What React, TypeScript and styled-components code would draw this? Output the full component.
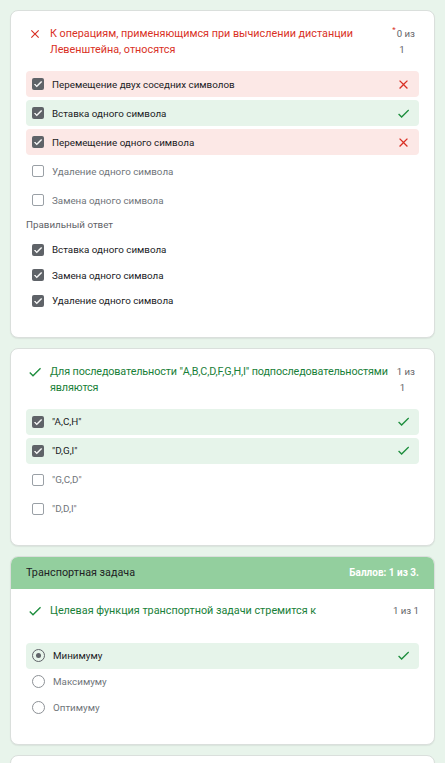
import React from "react";
import styled, { createGlobalStyle, css } from "styled-components";

const GlobalStyle = createGlobalStyle`
  html, body { margin: 0; padding: 0; }
  body {
    background: #e8f4eb;
    font-family: Roboto, "Noto Sans", Arial, sans-serif;
    color: #202124;
  }
`;

const RED = "#d93025";
const GREEN = "#1e8e3e";

const Page = styled.div`
  display: flex;
  flex-direction: column;
  gap: 10px;
  padding: 0 10px 20px;
`;

const CardTail = styled.div`
  height: 0;
  border-radius: 0 0 8px 8px;
  box-shadow: 0 1px 0 #d6dbd8;
`;

const Card = styled.div<{ $flush?: boolean }>`
  background: #fff;
  border: 1px solid #dadfdc;
  border-radius: 8px;
  overflow: hidden;
  box-shadow: 0 1px 1px rgba(60, 64, 67, 0.08);
  ${(p) =>
    !p.$flush &&
    css`
      padding: 15px 15px 23px;
    `}
`;

const CardBody = styled.div`
  padding: 14px 15px 23px;
`;

const SectionHeader = styled.div`
  height: 32px;
  background: #93cf9e;
  display: flex;
  align-items: center;
  justify-content: space-between;
  padding: 0 15px;
`;

const SectionTitle = styled.span`
  font-size: 10.8px;
  color: #202124;
`;

const SectionScore = styled.span`
  font-size: 10px;
  font-weight: 700;
  color: #fff;
`;

const TitleRow = styled.div`
  display: flex;
  align-items: flex-start;
`;

const TitleIcon = styled.span`
  flex: 0 0 18px;
  height: 16px;
  margin-right: 6px;
  display: flex;
  align-items: center;
  justify-content: center;
`;

const TitleText = styled.div<{ $ok: boolean; $tight?: boolean }>`
  flex: 1;
  min-width: 0;
  font-size: 10.8px;
  line-height: 16px;
  letter-spacing: ${(p) => (p.$tight ? "-0.13px" : "normal")};
  color: ${(p) => (p.$ok ? "#188038" : RED)};
`;

const Score = styled.div<{ $pad?: boolean }>`
  flex: 0 0 auto;
  margin-left: 3px;
  padding-right: ${(p) => (p.$pad ? 4 : 0)}px;
  font-size: 9.6px;
  line-height: 16px;
  color: #5f6368;
  white-space: nowrap;
`;

const ScoreLine = styled.div<{ $indent?: number }>`
  padding-left: ${(p) => p.$indent ?? 0}px;
`;

const Star = styled.span`
  color: ${RED};
  font-size: 8px;
  line-height: 8px;
  vertical-align: top;
  margin-right: 1px;
`;

const Options = styled.div<{ $top?: number; $gap?: number }>`
  display: flex;
  flex-direction: column;
  gap: ${(p) => p.$gap ?? 3}px;
  margin-top: ${(p) => p.$top ?? 13}px;
`;

type Status = "wrong" | "right" | "none";

const OptionRow = styled.div<{ $status: Status; $h?: number }>`
  height: ${(p) => p.$h ?? 26}px;
  display: flex;
  align-items: center;
  padding: 0 8px 0 6px;
  border-radius: 4px;
  background: ${(p) =>
    p.$status === "wrong" ? "#fce8e6" : p.$status === "right" ? "#e6f4ea" : "transparent"};
`;

const OptionLabel = styled.span<{ $active: boolean }>`
  margin-left: 8px;
  font-size: 9.8px;
  color: ${(p) => (p.$active ? "#202124" : "#70757a")};
`;

const RowMark = styled.span`
  margin-left: auto;
  display: flex;
  align-items: center;
`;

const Box = styled.span<{ $checked: boolean }>`
  flex: 0 0 12px;
  width: 12px;
  height: 12px;
  box-sizing: border-box;
  border-radius: 2px;
  display: flex;
  align-items: center;
  justify-content: center;
  ${(p) =>
    p.$checked
      ? css`
          background: #5f6368;
        `
      : css`
          border: 1px solid #9aa0a6;
        `}
`;

const Radio = styled.span<{ $checked: boolean }>`
  flex: 0 0 13px;
  width: 13px;
  height: 13px;
  box-sizing: border-box;
  border-radius: 50%;
  border: 1px solid ${(p) => (p.$checked ? "#5f6368" : "#8d9196")};
  display: flex;
  align-items: center;
  justify-content: center;
  &::after {
    content: "";
    width: 5px;
    height: 5px;
    border-radius: 50%;
    background: ${(p) => (p.$checked ? "#5f6368" : "transparent")};
  }
`;

const CorrectLabel = styled.div`
  margin-top: 4px;
  font-size: 9.8px;
  line-height: 16px;
  color: #5f6368;
`;

const CloseIcon = ({ size, color }: { size: number; color: string }) => (
  <svg width={size} height={size} viewBox="0 0 24 24" fill={color}>
    <path d="M19 6.41L17.59 5 12 10.59 6.41 5 5 6.41 10.59 12 5 17.59 6.41 19 12 13.41 17.59 19 19 17.59 13.41 12z" />
  </svg>
);

const CheckIcon = ({ size, color }: { size: number; color: string }) => (
  <svg width={size} height={size} viewBox="0 0 24 24" fill={color}>
    <path d="M9 16.17L4.83 12l-1.42 1.41L9 19 21 7l-1.41-1.41z" />
  </svg>
);

const BoxCheck = () => (
  <svg width="10" height="10" viewBox="0 0 24 24" fill="#fff">
    <path d="M9 16.17L4.83 12l-1.42 1.41L9 19 21 7l-1.41-1.41z" stroke="#fff" strokeWidth="1.5" />
  </svg>
);

type Opt = { text: string; checked: boolean; status: Status; mark?: "x" | "ok" };

const CheckOption = ({ o, h }: { o: Opt; h?: number }) => (
  <OptionRow $status={o.status} $h={h}>
    <Box $checked={o.checked}>{o.checked && <BoxCheck />}</Box>
    <OptionLabel $active={o.checked}>{o.text}</OptionLabel>
    {o.mark && (
      <RowMark>
        {o.mark === "x" ? <CloseIcon size={15} color={RED} /> : <CheckIcon size={15} color={GREEN} />}
      </RowMark>
    )}
  </OptionRow>
);

const RadioOption = ({ o }: { o: Opt }) => (
  <OptionRow $status={o.status}>
    <Radio $checked={o.checked} />
    <OptionLabel $active={o.checked}>{o.text}</OptionLabel>
    {o.mark && (
      <RowMark>
        <CheckIcon size={15} color={GREEN} />
      </RowMark>
    )}
  </OptionRow>
);

const q1: Opt[] = [
  { text: "Перемещение двух соседних символов", checked: true, status: "wrong", mark: "x" },
  { text: "Вставка одного символа", checked: true, status: "right", mark: "ok" },
  { text: "Перемещение одного символа", checked: true, status: "wrong", mark: "x" },
  { text: "Удаление одного символа", checked: false, status: "none" },
  { text: "Замена одного символа", checked: false, status: "none" },
];

const q1correct: Opt[] = [
  { text: "Вставка одного символа", checked: true, status: "none" },
  { text: "Замена одного символа", checked: true, status: "none" },
  { text: "Удаление одного символа", checked: true, status: "none" },
];

const q2: Opt[] = [
  { text: "\"A,C,H\"", checked: true, status: "right", mark: "ok" },
  { text: "\"D,G,I\"", checked: true, status: "right", mark: "ok" },
  { text: "\"G,C,D\"", checked: false, status: "none" },
  { text: "\"D,D,I\"", checked: false, status: "none" },
];

const q3: Opt[] = [
  { text: "Минимуму", checked: true, status: "right", mark: "ok" },
  { text: "Максимуму", checked: false, status: "none" },
  { text: "Оптимуму", checked: false, status: "none" },
];

export default function App() {
  return (
    <>
      <GlobalStyle />
      <Page>
        <CardTail />

        <Card>
          <TitleRow>
            <TitleIcon>
              <CloseIcon size={14} color={RED} />
            </TitleIcon>
            <TitleText $ok={false}>
              К операциям, применяющимся при вычислении дистанции Левенштейна, относятся
            </TitleText>
            <Score $pad>
              <ScoreLine>
                <Star>*</Star>0 из
              </ScoreLine>
              <ScoreLine $indent={7}>1</ScoreLine>
            </Score>
          </TitleRow>
          <Options>
            {q1.map((o) => (
              <CheckOption key={o.text} o={o} />
            ))}
          </Options>
          <CorrectLabel>Правильный ответ</CorrectLabel>
          <Options $top={4} $gap={0}>
            {q1correct.map((o) => (
              <CheckOption key={o.text} o={o} h={25.5} />
            ))}
          </Options>
        </Card>

        <Card>
          <TitleRow>
            <TitleIcon>
              <CheckIcon size={16} color={GREEN} />
            </TitleIcon>
            <TitleText $ok $tight>
              Для последовательности "A,B,C,D,F,G,H,I" подпоследовательностями являются
            </TitleText>
            <Score $pad>
              <ScoreLine>1 из</ScoreLine>
              <ScoreLine $indent={3}>1</ScoreLine>
            </Score>
          </TitleRow>
          <Options>
            {q2.map((o) => (
              <CheckOption key={o.text} o={o} />
            ))}
          </Options>
        </Card>

        <Card $flush>
          <SectionHeader>
            <SectionTitle>Транспортная задача</SectionTitle>
            <SectionScore>Баллов: 1 из 3.</SectionScore>
          </SectionHeader>
          <CardBody>
            <TitleRow>
              <TitleIcon>
                <CheckIcon size={16} color={GREEN} />
              </TitleIcon>
              <TitleText $ok>Целевая функция транспортной задачи стремится к</TitleText>
              <Score>1 из 1</Score>
            </TitleRow>
            <Options $top={24} $gap={0}>
              {q3.map((o) => (
                <RadioOption key={o.text} o={o} />
              ))}
            </Options>
          </CardBody>
        </Card>

        <Card>
          <TitleRow>
            <TitleText $ok>&nbsp;</TitleText>
          </TitleRow>
        </Card>
      </Page>
    </>
  );
}
